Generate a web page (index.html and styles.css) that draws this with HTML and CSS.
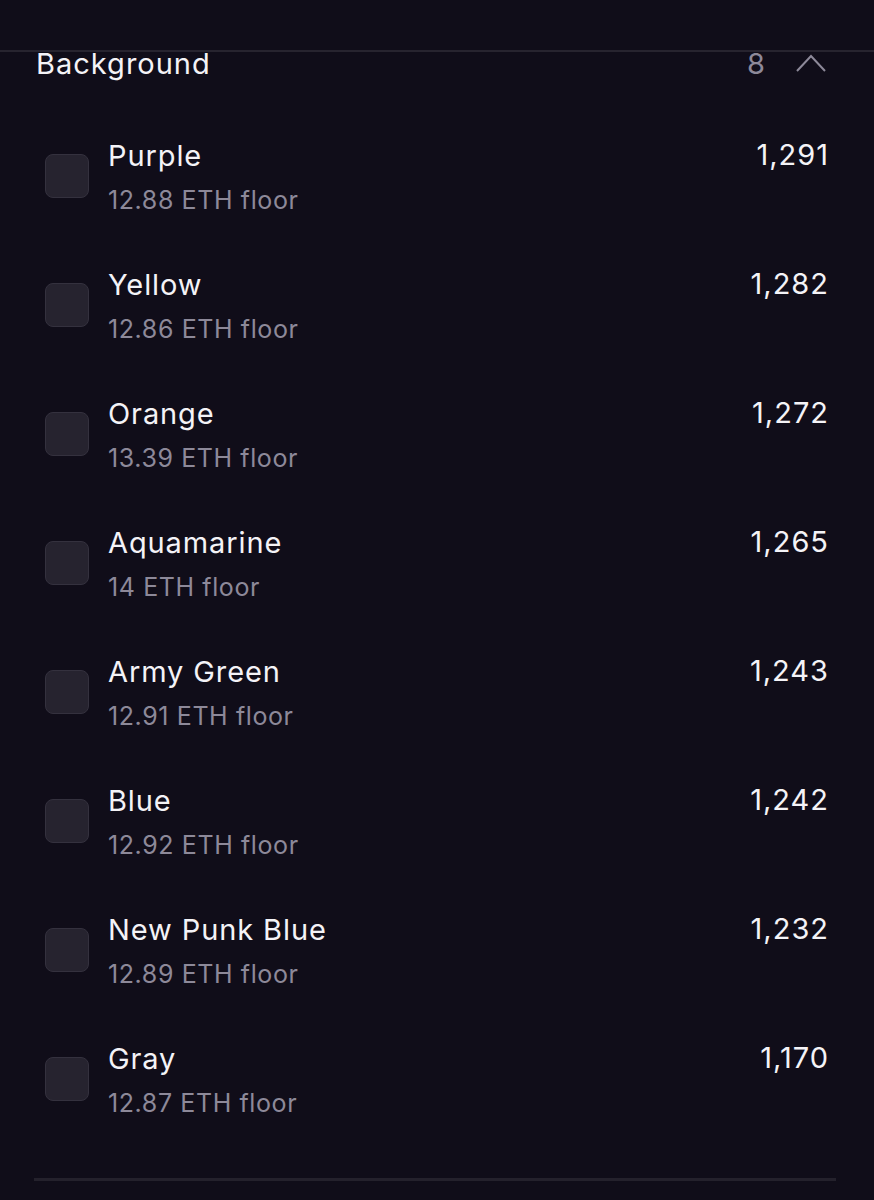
FILE: index.html
```html
<!DOCTYPE html>
<html lang="en">
    <head>
        <meta charset="UTF-8">
        <meta name="viewport" content="width=device-width, initial-scale=1.0">
        <title>Background</title>
        <link rel="stylesheet" href="styles.css">
    </head>
<body>

    <div class="panel">
        <div class="section-header">
            <span class="section-title">Background</span>
            <span class="section-count">8</span>
            <svg class="chevron" width="32" height="20" viewBox="0 0 32 20">
                <polyline points="2,18 16,3 30,18" fill="none" stroke="#8d8999" stroke-width="2"/>
            </svg>
        </div>

        <div class="trait-list">
            <div class="trait">
                <div class="checkbox"></div>
                <div class="trait-info">
                    <div class="trait-name">Purple</div>
                    <div class="trait-floor">12.88 ETH floor</div>
                </div>
                <div class="trait-count">1,291</div>
            </div>
            <div class="trait">
                <div class="checkbox"></div>
                <div class="trait-info">
                    <div class="trait-name">Yellow</div>
                    <div class="trait-floor">12.86 ETH floor</div>
                </div>
                <div class="trait-count">1,282</div>
            </div>
            <div class="trait">
                <div class="checkbox"></div>
                <div class="trait-info">
                    <div class="trait-name">Orange</div>
                    <div class="trait-floor">13.39 ETH floor</div>
                </div>
                <div class="trait-count">1,272</div>
            </div>
            <div class="trait">
                <div class="checkbox"></div>
                <div class="trait-info">
                    <div class="trait-name">Aquamarine</div>
                    <div class="trait-floor">14 ETH floor</div>
                </div>
                <div class="trait-count">1,265</div>
            </div>
            <div class="trait">
                <div class="checkbox"></div>
                <div class="trait-info">
                    <div class="trait-name">Army Green</div>
                    <div class="trait-floor">12.91 ETH floor</div>
                </div>
                <div class="trait-count">1,243</div>
            </div>
            <div class="trait">
                <div class="checkbox"></div>
                <div class="trait-info">
                    <div class="trait-name">Blue</div>
                    <div class="trait-floor">12.92 ETH floor</div>
                </div>
                <div class="trait-count">1,242</div>
            </div>
            <div class="trait">
                <div class="checkbox"></div>
                <div class="trait-info">
                    <div class="trait-name">New Punk Blue</div>
                    <div class="trait-floor">12.89 ETH floor</div>
                </div>
                <div class="trait-count">1,232</div>
            </div>
            <div class="trait">
                <div class="checkbox"></div>
                <div class="trait-info">
                    <div class="trait-name">Gray</div>
                    <div class="trait-floor">12.87 ETH floor</div>
                </div>
                <div class="trait-count">1,170</div>
            </div>
        </div>

        <div class="bottom-line"></div>
    </div>

</body>
</html>
```

FILE: styles.css
```css
body {
    margin: 0;
    background-color: #100d19;
    font-family: Inter, "Noto Sans", sans-serif;
    color: #f4f3f7;
}
.panel {
    margin-top: 50px;
    border-top: 2px solid #27242f;
    height: 1148px;
}
.section-header {
    display: flex;
    align-items: center;
    height: 22px;
    padding: 0 47px 0 36px;
}
.section-title {
    flex-grow: 1;
    font-size: 29px;
    letter-spacing: 1px;
}
.section-count {
    font-size: 29px;
    color: #8d8999;
    margin-right: 30px;
}
.chevron {
    display: block;
}
.trait-list {
    margin-top: 39px;
}
.trait {
    display: flex;
    align-items: center;
    height: 129px;
    padding: 0 45px 0 45px;
    box-sizing: border-box;
}
.checkbox {
    width: 42px;
    height: 42px;
    border: 1px solid #34313e;
    border-radius: 8px;
    background-color: #26232f;
    margin-top: -4px;
    margin-right: 19px;
}
.trait-info {
    flex-grow: 1;
}
.trait-name {
    font-size: 29px;
    line-height: 44px;
    letter-spacing: 0.9px;
}
.trait-floor {
    font-size: 25px;
    line-height: 44px;
    letter-spacing: 0.6px;
    color: #8d8999;
}
.trait-count {
    align-self: flex-start;
    margin-top: 20px;
    font-size: 29px;
    line-height: 44px;
    letter-spacing: 1px;
}
.bottom-line {
    margin: 33px 38px 0 34px;
    height: 3px;
    background-color: #24212c;
}
```
